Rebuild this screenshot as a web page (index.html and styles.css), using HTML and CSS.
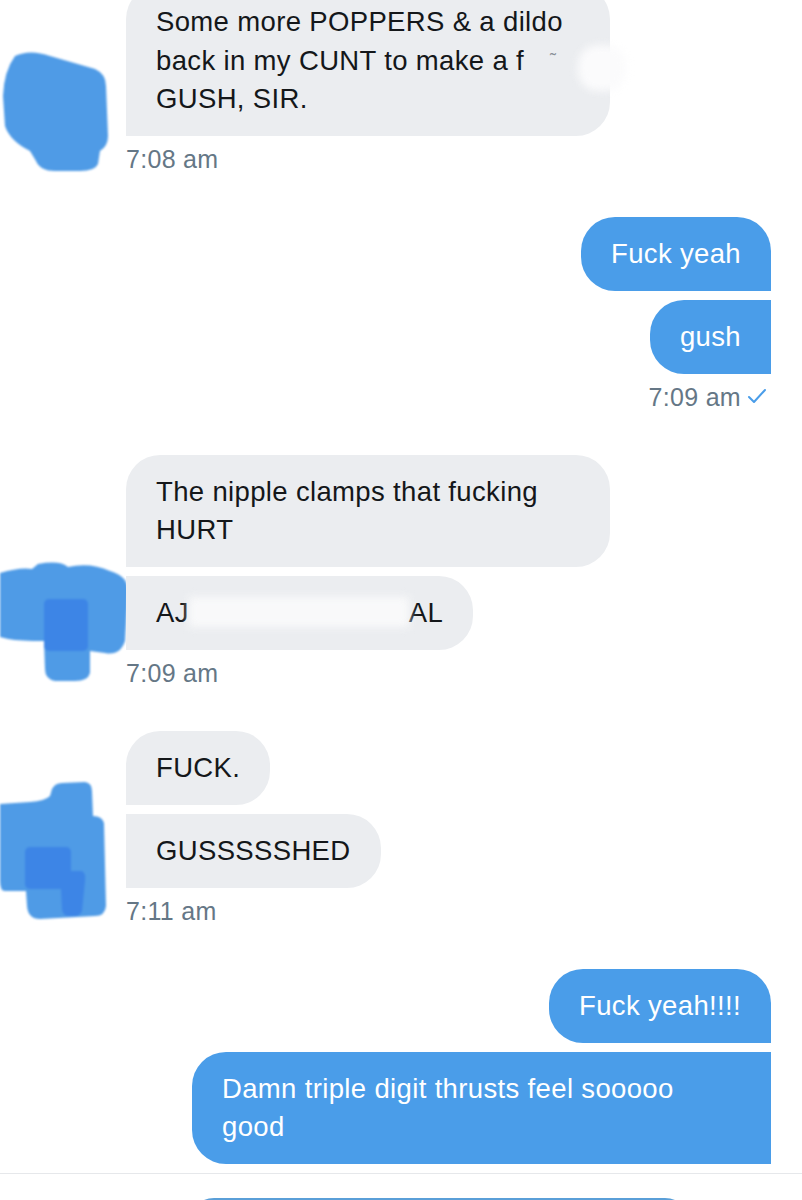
FILE: index.html
```html
<!DOCTYPE html>
<html lang="en">
<head>
<meta charset="utf-8">
<title>Messages</title>
<link rel="stylesheet" href="styles.css">
</head>
<body>
<div class="chat">
  <div class="thread">

    <div class="group in first">
      <div class="avatar">
        <svg width="126" height="124" viewBox="0 48 126 124" class="blob">
          <path class="lt" d="M15,55 Q30,48 50,55 L95,68 Q106,73 106,85 L108,135 Q108,145 100,150 L98,163 Q95,170 80,170 L55,170 Q40,170 36,160 L30,150 Q10,140 5,125 L3,95 Q4,70 15,55 Z"/>
        </svg>
      </div>
      <div class="msgs">
        <div class="bubble wide solo">Some more POPPERS &amp; a dildo<br>back in my CUNT to make a f<span class="tick-mark">˜</span><br>GUSH, SIR.<span class="smear smear-1"></span></div>
        <div class="time">7:08 am</div>
      </div>
    </div>

    <div class="group out">
      <div class="msgs">
        <div class="bubble head">Fuck yeah</div>
        <div class="bubble tail">gush</div>
        <div class="time">7:09 am <svg class="check" width="20" height="16" viewBox="0 0 20 16"><path d="M2,9 L7,14 L18,2" fill="none" stroke="#4a9de9" stroke-width="2" stroke-linecap="round" stroke-linejoin="round"/></svg></div>
      </div>
    </div>

    <div class="group in">
      <div class="avatar">
        <svg width="126" height="130" viewBox="0 556 126 130" class="blob">
          <path class="lt" d="M0,572 Q20,566 32,568 L38,563 Q60,559 68,566 Q90,561 110,570 Q128,575 128,590 L125,640 Q120,655 105,652 L90,650 L90,672 Q88,680 75,680 L55,680 Q45,678 45,668 L44,640 Q20,640 8,638 L0,636 Z"/>
          <rect class="dk" x="44" y="598" width="44" height="52" rx="5"/>
        </svg>
      </div>
      <div class="msgs">
        <div class="bubble wide head">The nipple clamps that fucking<br>HURT</div>
        <div class="bubble tail">AJ<span class="smear smear-2"></span>AL</div>
        <div class="time">7:09 am</div>
      </div>
    </div>

    <div class="group in">
      <div class="avatar">
        <svg width="126" height="150" viewBox="0 774 126 150" class="blob">
          <path class="lt" d="M0,803 L30,801 Q45,800 50,795 L52,788 Q55,782 62,782 L85,781 Q92,782 92,790 L93,815 Q102,815 104,822 L106,905 Q105,915 95,915 L40,918 Q28,918 27,905 L26,890 L5,890 Q0,890 0,880 Z"/>
          <rect class="dk" x="25" y="846" width="46" height="42" rx="5"/>
          <path class="dk" d="M60,870 L82,870 Q86,872 85,880 L82,910 Q80,915 74,915 L68,915 Q63,915 62,908 Z"/>
        </svg>
      </div>
      <div class="msgs">
        <div class="bubble head">FUCK.</div>
        <div class="bubble tail">GUSSSSSHED</div>
        <div class="time">7:11 am</div>
      </div>
    </div>

    <div class="group out last">
      <div class="msgs">
        <div class="bubble head">Fuck yeah!!!!</div>
        <div class="bubble wide tail">Damn triple digit thrusts feel sooooo<br>good</div>
      </div>
    </div>

  </div>

  <div class="composer">
    <div class="input"></div>
  </div>
</div>
</body>
</html>
```

FILE: styles.css
```css
* { box-sizing: border-box; }

html, body {
  margin: 0;
  padding: 0;
  background: #ffffff;
}

body {
  font-family: "Liberation Sans", Arial, sans-serif;
  color: #14171a;
  width: 802px;
  height: 1200px;
  overflow: hidden;
}

.chat {
  display: flex;
  flex-direction: column;
}

.thread {
  display: flex;
  flex-direction: column;
  gap: 44px;
}

.group {
  display: flex;
  align-items: flex-end;
}

.group.first { margin-top: -15px; }

.group.out {
  justify-content: flex-end;
  padding-right: 31px;
}

.avatar {
  width: 126px;
  flex: 0 0 126px;
  display: flex;
  align-items: flex-end;
}

.blob { display: block; overflow: visible; filter: blur(1.2px); }
.blob .lt { fill: #4f9be6; }
.blob .dk { fill: #3d85e6; }

.msgs {
  display: flex;
  flex-direction: column;
  gap: 9px;
}

.group.in .msgs { align-items: flex-start; }
.group.out .msgs { align-items: flex-end; }

.bubble {
  position: relative;
  font-size: 27.5px;
  letter-spacing: 0.35px;
  line-height: 38px;
  padding: 18px 30px;
  border-radius: 34px;
  white-space: nowrap;
}

.group.in .bubble {
  background: #ebedf0;
  color: #14171a;
  border-bottom-left-radius: 0;
}
.group.in .bubble.tail { border-top-left-radius: 0; }
.group.in .bubble.wide { width: 484px; }

.group.out .bubble {
  background: #4a9de9;
  color: #ffffff;
  border-bottom-right-radius: 0;
}
.group.out .bubble.tail { border-top-right-radius: 0; }
.group.out .bubble.wide { width: 579px; }

.time {
  font-size: 25px;
  letter-spacing: 0.3px;
  line-height: 28px;
  color: #657786;
  display: flex;
  align-items: center;
  gap: 6px;
}

.check { display: block; margin-top: -2px; margin-right: 4px; }

.tick-mark {
  color: #8a9097;
  font-size: 18px;
  margin-left: 26px;
  vertical-align: 4px;
}

.smear {
  background: #fbfbfc;
  filter: blur(4px);
}

.smear-1 {
  position: absolute;
  left: 452px;
  top: 60px;
  width: 48px;
  height: 46px;
  border-radius: 20px;
}

.smear-2 {
  display: inline-block;
  width: 220px;
  height: 30px;
  vertical-align: -5px;
  opacity: 0.9;
}

.composer {
  margin-top: 9px;
  border-top: 1px solid #e6e8eb;
  padding: 24px 0 0 189px;
}

.input {
  width: 501px;
  height: 50px;
  border: 2px solid #5a9fd8;
  border-radius: 26px;
}
```
